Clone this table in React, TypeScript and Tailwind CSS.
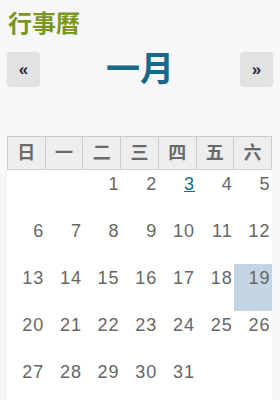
import React from 'react'

const weekDays = ['日', '一', '二', '三', '四', '五', '六']

const weeks: (number | null)[][] = [
    [null, null, null, 1, 2, 3, 4, 5].slice(1),
    [6, 7, 8, 9, 10, 11, 12],
    [13, 14, 15, 16, 17, 18, 19],
    [20, 21, 22, 23, 24, 25, 26],
    [27, 28, 29, 30, 31, null, null],
]

const TODAY = 19
const LINKED = 3

const App: React.FC = () => {
    return (
        <div className="w-[280px] h-[400px] overflow-hidden bg-[#f7f7f7] font-['Liberation_Sans','Noto_Sans_CJK_TC',sans-serif]">
            <h2 className="pl-2 pt-[10px] text-[24px] leading-[28px] font-bold text-[#7b961f]">行事曆</h2>
            <div className="flex items-center justify-between px-[7px] mt-[12px]">
                <button className="w-[33px] h-[35px] rounded-[4px] bg-[#e2e2e2] text-[#1c2a44] text-[17px] font-bold leading-none">
                    «
                </button>
                <div className="text-[34px] leading-[38px] font-bold text-[#16698a]">一月</div>
                <button className="w-[33px] h-[35px] rounded-[4px] bg-[#e2e2e2] text-[#1c2a44] text-[17px] font-bold leading-none">
                    »
                </button>
            </div>
            <table className="mt-[48px] ml-[7px] w-[265px] table-fixed border-collapse bg-white">
                <thead>
                    <tr>
                        {weekDays.map((d) => (
                            <th
                                key={d}
                                className="h-[33px] border border-[#cccccc] bg-[#eeeeee] text-[18px] font-bold text-[#6a6a6a] text-center p-0"
                            >
                                {d}
                            </th>
                        ))}
                    </tr>
                </thead>
                <tbody>
                    {weeks.map((week, i) => (
                        <tr key={i}>
                            {week.map((day, j) => (
                                <td
                                    key={j}
                                    className={
                                        'h-[47px] align-top text-right pr-[1px] pt-[3px] text-[18px] leading-[22px] tracking-[1px] text-[#666] ' +
                                        (day === TODAY ? 'bg-[#c3d5e2]' : '')
                                    }
                                >
                                    {day === LINKED ? (
                                        <a href="#" className="text-[#116a8a] underline">{day}</a>
                                    ) : (
                                        day
                                    )}
                                </td>
                            ))}
                        </tr>
                    ))}
                </tbody>
            </table>
        </div>
    )
}

export default App
